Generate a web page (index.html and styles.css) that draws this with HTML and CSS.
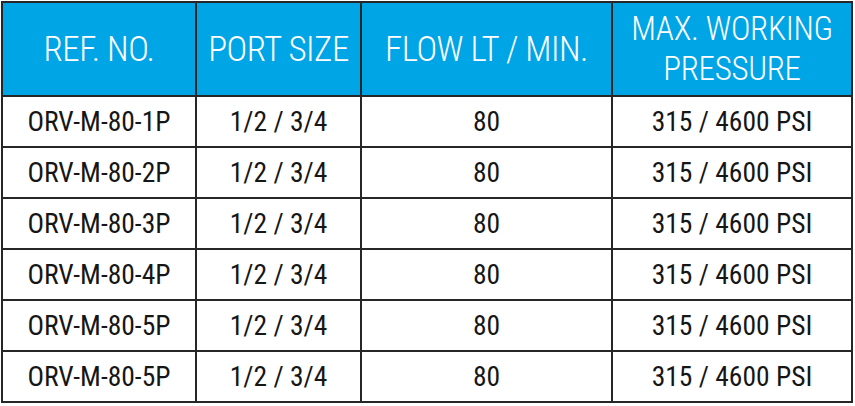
FILE: index.html
```html
<!DOCTYPE html>
<html lang="en">
<head>
<meta charset="utf-8">
<title>ORV-M-80 Specifications</title>
<link rel="stylesheet" href="styles.css">
</head>
<body>
<div class="spec-table">
  <div class="cell head">REF. NO.</div>
  <div class="cell head">PORT SIZE</div>
  <div class="cell head">FLOW LT / MIN.</div>
  <div class="cell head two-line">MAX. WORKING<br>PRESSURE</div>

  <div class="cell">ORV-M-80-1P</div>
  <div class="cell">1/2 / 3/4</div>
  <div class="cell">80</div>
  <div class="cell">315 / 4600 PSI</div>

  <div class="cell">ORV-M-80-2P</div>
  <div class="cell">1/2 / 3/4</div>
  <div class="cell">80</div>
  <div class="cell">315 / 4600 PSI</div>

  <div class="cell">ORV-M-80-3P</div>
  <div class="cell">1/2 / 3/4</div>
  <div class="cell">80</div>
  <div class="cell">315 / 4600 PSI</div>

  <div class="cell">ORV-M-80-4P</div>
  <div class="cell">1/2 / 3/4</div>
  <div class="cell">80</div>
  <div class="cell">315 / 4600 PSI</div>

  <div class="cell">ORV-M-80-5P</div>
  <div class="cell">1/2 / 3/4</div>
  <div class="cell">80</div>
  <div class="cell">315 / 4600 PSI</div>

  <div class="cell">ORV-M-80-5P</div>
  <div class="cell">1/2 / 3/4</div>
  <div class="cell">80</div>
  <div class="cell">315 / 4600 PSI</div>
</div>
</body>
</html>
```
FILE: styles.css
```css
html, body {
  margin: 0;
  padding: 0;
  background: #ffffff;
}

body {
  padding: 1px;
  font-family: "Roboto Condensed", "Liberation Sans", sans-serif;
}

.spec-table {
  display: grid;
  grid-template-columns: 192px 163px 249px 238px;
  grid-template-rows: 92px repeat(6, 49px);
  gap: 2px;
  padding: 2px;
  background: #262626;
  width: max-content;
}

.cell {
  display: flex;
  align-items: center;
  justify-content: center;
  text-align: center;
  background: #ffffff;
  color: #161616;
  font-size: 27.5px;
  line-height: 1;
  white-space: nowrap;
}

.head {
  background: #00a5e6;
  color: #ffffff;
  font-size: 35px;
  font-weight: 300;
  letter-spacing: -0.5px;
}

.head.two-line {
  font-size: 33px;
  line-height: 40px;
  letter-spacing: -0.3px;
}
```
